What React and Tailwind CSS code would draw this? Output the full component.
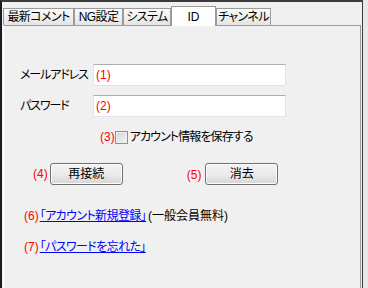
import React from 'react';

const font = "font-['Liberation_Sans','Noto_Sans_CJK_JP',sans-serif] [font-feature-settings:'palt'] whitespace-nowrap";

function Tab({ label, width, active }) {
  if (active) {
    return (
      <div
        className="relative z-10 -mb-px flex h-[20px] items-start justify-center border border-b-0 border-[#9a9a9a] bg-white pt-[3px] text-[12px] leading-[14px] text-black"
        style={{ width }}
      >
        {label}
      </div>
    );
  }
  return (
    <div
      className="flex h-[17px] items-center justify-center border border-b-0 border-[#9a9a9a] bg-gradient-to-b from-[#fbfbfb] to-[#e4e4e4] text-[12px] leading-[14px] tracking-[-0.6px] text-black"
      style={{ width }}
    >
      {label}
    </div>
  );
}

function Num({ n }) {
  return <span className="text-[12px] leading-[14px] tracking-normal text-[#ff0000]">({n})</span>;
}

function Field({ label, n, first }) {
  return (
    <div className={`flex items-center ${first ? 'mt-[38px]' : 'mt-[9px]'}`}>
      <div className="w-[73px] text-[12px] leading-[14px] tracking-[-1.1px] text-black">{label}</div>
      <div className="flex h-[22px] w-[193px] items-center border border-[#e2e3ea] border-t-[#abadb3] bg-white pl-[2px]">
        <Num n={n} />
      </div>
    </div>
  );
}

function Button({ children }) {
  return (
    <div className="flex h-[22px] w-[73px] items-center justify-center rounded-[3px] border border-[#707070] bg-gradient-to-b from-[#f2f2f2] via-[#ebebeb] to-[#d6d6d6] text-[12px] leading-[14px] text-black shadow-[inset_0_0_0_1px_#fcfcfc]">
      {children}
    </div>
  );
}

export default function App() {
  return (
    <div className={`flex h-[288px] w-[368px] overflow-hidden bg-[#e8e8e8] ${font}`}>
      <div className="flex w-[363px] flex-col border-l-2 border-r border-t-2 border-l-[#1d1a26] border-r-[#3c3c3c] border-t-[#3c3c3c] bg-[#f0f0f0]">
        {/* Tabs */}
        <div className="ml-[1px] mt-[4px] flex h-[19px] items-end">
          <Tab label="最新コメント" width={71} />
          <Tab label="NG設定" width={49} />
          <Tab label="システム" width={48} />
          <Tab label="ID" width={45} active />
          <Tab label="チャンネル" width={55} />
        </div>

        {/* Panel */}
        <div className="mx-[1px] flex flex-1 flex-col border border-b-0 border-[#9c9c9c] border-l-white bg-[#f0f0f0] pl-[16px]">
          <Field label="メールアドレス" n={1} first />
          <Field label="パスワード" n={2} />

          <div className="ml-[80px] mt-[13px] flex items-center">
            <Num n={3} />
            <div className="h-[13px] w-[13px] border border-[#8e8f8f] bg-gradient-to-br from-[#d4d4d4] to-[#f4f4f4] shadow-[inset_0_0_0_1px_#f0f0f0]" />
            <span className="ml-[2px] text-[12px] leading-[14px] tracking-[-0.9px] text-black">アカウント情報を保存する</span>
          </div>

          <div className="ml-[13px] mt-[18px] flex items-center">
            <Num n={4} />
            <div className="ml-[2px]">
              <Button>再接続</Button>
            </div>
            <div className="ml-[64px]">
              <Num n={5} />
            </div>
            <div className="ml-[4px]">
              <Button>消去</Button>
            </div>
          </div>

          <div className="ml-[4px] mt-[22px] flex items-center text-[12px] leading-[16px]">
            <Num n={6} />
            <span className="ml-[1px] tracking-[-0.6px] text-[#0000ff] underline">「アカウント新規登録」</span>
            <span className="ml-[2px] text-black">(一般会員無料)</span>
          </div>

          <div className="ml-[4px] mt-[15px] flex items-center text-[12px] leading-[16px]">
            <Num n={7} />
            <span className="ml-[1px] tracking-[-0.6px] text-[#0000ff] underline">「パスワードを忘れた」</span>
          </div>
        </div>
      </div>
      <div className="w-[5px]" />
    </div>
  );
}
